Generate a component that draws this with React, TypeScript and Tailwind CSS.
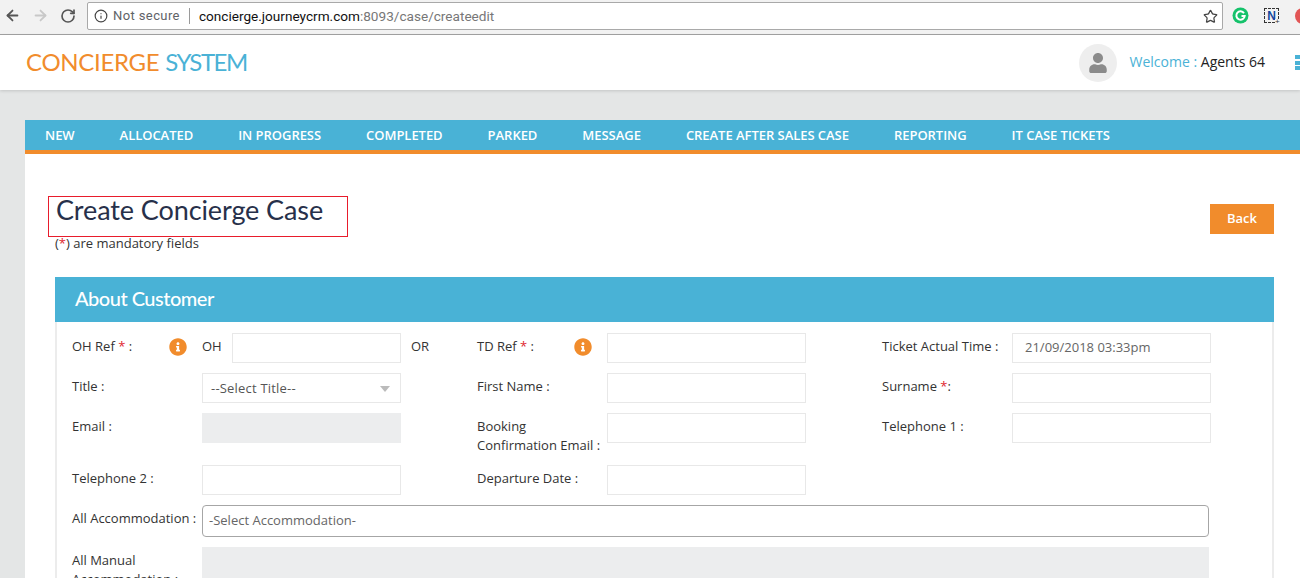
import { ArrowLeft, ArrowRight, RotateCw, Info, Star } from "lucide-react";
import { FaInfoCircle, FaUser } from "react-icons/fa";

const navItems = [
  "NEW",
  "ALLOCATED",
  "IN PROGRESS",
  "COMPLETED",
  "PARKED",
  "MESSAGE",
  "CREATE AFTER SALES CASE",
  "REPORTING",
  "IT CASE TICKETS",
];

const Star2 = () => <span className="text-[#e0262e]">*</span>;

const Field = ({
  value = "",
  disabled = false,
  className = "w-[199px]",
}: {
  value?: string;
  disabled?: boolean;
  className?: string;
}) => (
  <div
    className={`${className} h-[30px] shrink-0 border flex items-center px-[12px] text-[13px] text-[#666] ${
      disabled ? "bg-[#ecedee] border-[#ecedee]" : "bg-white border-[#e8e8e8]"
    }`}
  >
    {value}
  </div>
);

const Label = ({ children, className = "" }: { children: React.ReactNode; className?: string }) => (
  <div className={`w-[130px] shrink-0 text-[13px] leading-[19px] pt-[4px] text-[#333] ${className}`}>{children}</div>
);

const Cell = ({ children }: { children: React.ReactNode }) => <div className="w-[405px] shrink-0 flex">{children}</div>;

const App = () => {
  return (
    <div className="h-[578px] w-[1300px] overflow-hidden bg-[#e4e6e6] font-['Open_Sans',sans-serif]">
      {/* Browser bar */}
      <div className="h-[35px] bg-[#f2f2f2] border-b border-[#a3a3a3] flex items-start pt-[2px] pl-[4px]">
        <div className="flex items-center h-[27px] gap-[11px] w-[83px] shrink-0">
          <ArrowLeft size={17} strokeWidth={2.5} className="text-[#555]" />
          <ArrowRight size={17} strokeWidth={2.5} className="text-[#c8c8c8]" />
          <RotateCw size={16} strokeWidth={2.5} className="text-[#555]" />
        </div>
        <div className="w-[1136px] h-[28px] shrink-0 bg-white border border-[#a9a9a9] rounded-[2px] flex items-center pl-[6px] pr-[4px] font-['Roboto',sans-serif] text-[13px]">
          <Info size={14} strokeWidth={2} className="text-[#444]" />
          <span className="ml-[5px] tracking-[0.4px] text-[#5f6368]">Not secure</span>
          <span className="w-px h-[16px] bg-[#9a9a9a] mx-[9px]"></span>
          <span className="text-[13.6px] text-[#111]">concierge.journeycrm.com</span>
          <span className="text-[13.6px] text-[#777]">:8093/case/createedit</span>
          <Star size={15} strokeWidth={2} className="ml-auto text-[#444]" />
        </div>
        <div className="flex items-center h-[27px] ml-[9px] shrink-0">
          <svg width="17" height="17" viewBox="0 0 17 17">
            <circle cx="8.5" cy="8.5" r="8" fill="#15c26b" />
            <path d="M12 6.2A4.2 4.2 0 1 0 12.7 9H9.5" fill="none" stroke="#fff" strokeWidth="2" />
          </svg>
          <div className="relative w-[15px] h-[15px] ml-[15px] border border-dashed border-[#333] flex items-center justify-center text-[12px] leading-none font-bold text-[#12479d] font-['Liberation_Sans',sans-serif]">
            N
            <span className="absolute -right-[3px] -bottom-[3px] w-[6px] h-[6px] bg-[#f2f2f2] text-[8px] leading-[6px] text-[#333] font-normal">
              +
            </span>
          </div>
          <div className="w-[16px] h-[16px] ml-[16px] shrink-0 rounded-full bg-[#e25555]"></div>
        </div>
      </div>

      {/* App header */}
      <div className="h-[55px] bg-white shadow-[0_1px_3px_rgba(0,0,0,0.15)] flex items-center pl-[26px]">
        <div className="mb-[2px] text-[24px] font-['Lato',sans-serif] tracking-[-0.3px] text-[#f18c2c]">
          CONCIERGE <span className="tracking-[-1.5px] text-[#4ab2d6]">SYSTEM</span>
        </div>
        <div className="ml-auto flex items-center">
          <div className="w-[38px] h-[38px] rounded-full bg-[#eeeeee] flex items-center justify-center">
            <FaUser size={20} className="text-[#8b8b8b]" />
          </div>
          <div className="ml-[13px] mb-[2px] text-[14px] text-[#4ab2d6]">
            Welcome : <span className="text-[#222]">Agents 64</span>
          </div>
          <div className="ml-[30px] w-[5px] flex flex-col gap-[1.5px]">
            <span className="h-[4px] bg-[#4ab2d6]"></span>
            <span className="h-[4px] bg-[#4ab2d6]"></span>
            <span className="h-[4px] bg-[#4ab2d6]"></span>
          </div>
        </div>
      </div>

      {/* Main card */}
      <div className="ml-[25px] mt-[30px] bg-white">
        <div className="h-[34px] bg-[#49b2d6] border-b-[4px] border-[#f18c2c] flex items-center pl-[20px] pt-[1px] gap-[45px] text-[13px] font-semibold tracking-[-0.04px] text-white">
          {navItems.map((item) => (
            <span key={item}>{item}</span>
          ))}
        </div>

        <div className="pl-[23px] pr-[26px] pt-[42px]">
          <div className="flex items-start justify-between">
            <div>
              <h1 className="w-[300px] h-[41px] border border-[#e81c2c] pl-[7px] text-[27px] leading-[26px] tracking-[-0.1px] font-['Lato',sans-serif] text-[#27304a]">
                Create Concierge Case
              </h1>
              <p className="ml-[7px] text-[13px] leading-[13px] text-[#333]">
                (<Star2 />) are mandatory fields
              </p>
            </div>
            <button className="mt-[8px] w-[64px] h-[30px] bg-[#f18c2c] text-white text-[13px] font-semibold">Back</button>
          </div>

          {/* About customer panel */}
          <div className="ml-[7px] mt-[27px]">
            <div className="h-[45px] bg-[#49b2d6] flex items-center pl-[20px] pb-[4px] text-[20px] font-['Lato',sans-serif] font-medium tracking-[-0.5px] text-white">
              About Customer
            </div>
            <div className="border-x-2 border-[#ececec] pl-[15px] pt-[11px]">
              <div className="flex mb-[10px]">
                <Cell>
                  <Label className="relative">
                    OH Ref <Star2 /> :
                    <FaInfoCircle size={18} className="absolute left-[97px] top-[5px] text-[#f18c2c]" />
                  </Label>
                  <div className="w-[30px] text-[13px] text-[#333] pt-[4px]">OH</div>
                  <Field className="w-[169px]" />
                  <div className="pl-[10px] text-[13px] text-[#333] pt-[4px]">OR</div>
                </Cell>
                <Cell>
                  <Label className="relative">
                    TD Ref <Star2 /> :
                    <FaInfoCircle size={18} className="absolute left-[97px] top-[5px] text-[#f18c2c]" />
                  </Label>
                  <Field />
                </Cell>
                <Cell>
                  <Label>Ticket Actual Time :</Label>
                  <Field value="21/09/2018 03:33pm" />
                </Cell>
              </div>

              <div className="flex mb-[10px]">
                <Cell>
                  <Label>Title :</Label>
                  <div className="w-[199px] h-[30px] border border-[#e8e8e8] flex items-center justify-between pl-[8px] pr-[10px] pt-[1px] text-[13px] tracking-[0.2px] text-[#555]">
                    --Select Title--
                    <span className="w-0 h-0 border-x-[5px] border-x-transparent border-t-[6px] border-t-[#bbb]"></span>
                  </div>
                </Cell>
                <Cell>
                  <Label>First Name :</Label>
                  <Field />
                </Cell>
                <Cell>
                  <Label>
                    Surname <Star2 />:
                  </Label>
                  <Field />
                </Cell>
              </div>

              <div className="flex mb-[10px] h-[42px]">
                <Cell>
                  <Label>Email :</Label>
                  <Field disabled />
                </Cell>
                <Cell>
                  <Label>Booking Confirmation Email :</Label>
                  <Field />
                </Cell>
                <Cell>
                  <Label>Telephone 1 :</Label>
                  <Field />
                </Cell>
              </div>

              <div className="flex mb-[10px]">
                <Cell>
                  <Label>Telephone 2 :</Label>
                  <Field />
                </Cell>
                <Cell>
                  <Label>Departure Date :</Label>
                  <Field />
                </Cell>
              </div>

              <div className="flex mb-[10px]">
                <Label>All Accommodation :</Label>
                <div className="w-[1007px] h-[32px] border border-[#a6a6a6] rounded-[4px] flex items-center px-[6px] text-[13px] text-[#666]">
                  -Select Accommodation-
                </div>
              </div>

              <div className="flex">
                <Label>
                  <div className="w-[110px]">All Manual Accommodation :</div>
                </Label>
                <div className="w-[1007px] h-[60px] bg-[#ecedee]"></div>
              </div>
            </div>
          </div>
        </div>
      </div>
    </div>
  );
};

export default App;
